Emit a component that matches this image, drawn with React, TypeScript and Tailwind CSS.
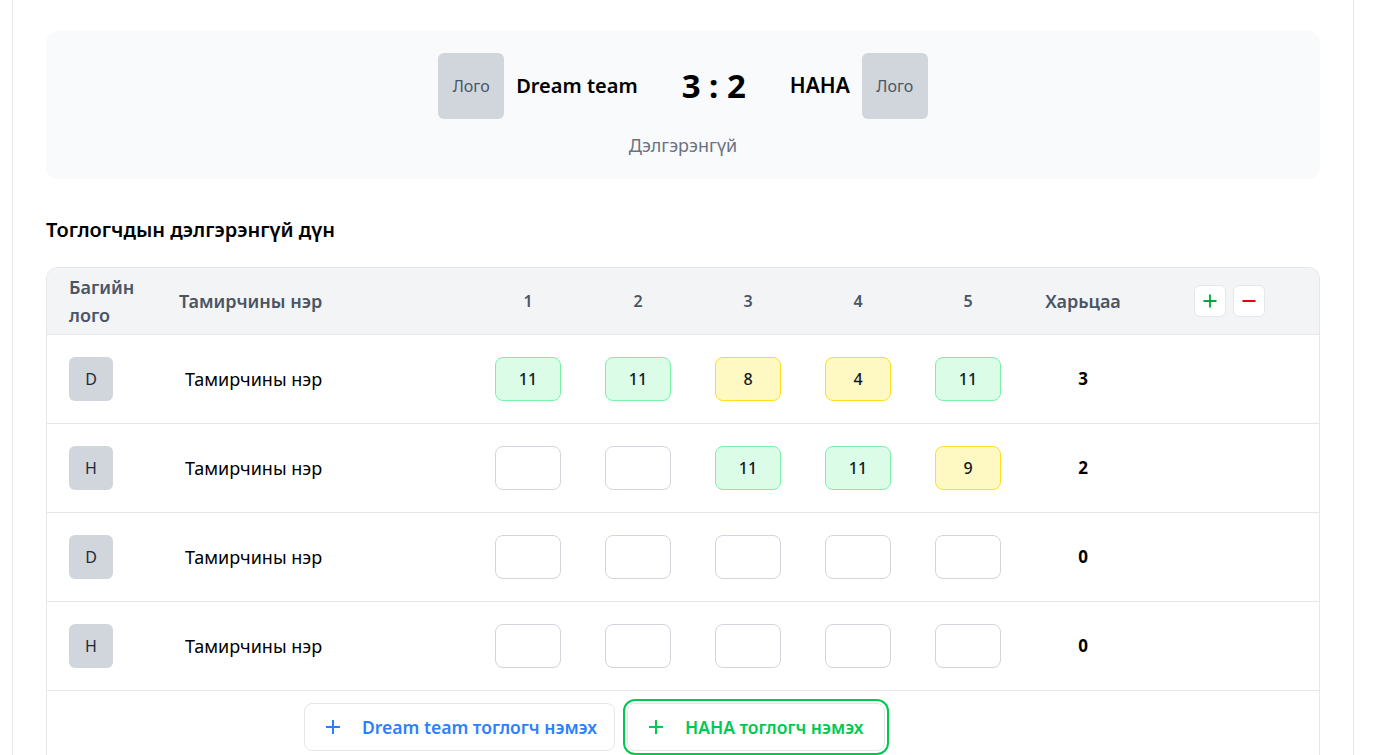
import { Plus, Minus } from 'lucide-react';

type Score = { value: number | null; win?: boolean };

interface PlayerRow {
  team: string;
  name: string;
  scores: Score[];
  total: number;
}

const rows: PlayerRow[] = [
  {
    team: 'D',
    name: 'Тамирчины нэр',
    scores: [
      { value: 11, win: true },
      { value: 11, win: true },
      { value: 8 },
      { value: 4 },
      { value: 11, win: true },
    ],
    total: 3,
  },
  {
    team: 'H',
    name: 'Тамирчины нэр',
    scores: [
      { value: null },
      { value: null },
      { value: 11, win: true },
      { value: 11, win: true },
      { value: 9 },
    ],
    total: 2,
  },
  {
    team: 'D',
    name: 'Тамирчины нэр',
    scores: [{ value: null }, { value: null }, { value: null }, { value: null }, { value: null }],
    total: 0,
  },
  {
    team: 'H',
    name: 'Тамирчины нэр',
    scores: [{ value: null }, { value: null }, { value: null }, { value: null }, { value: null }],
    total: 0,
  },
];

const gridCols = 'grid grid-cols-[113px_313px_110px_110px_110px_110px_110px_120px_1fr]';

// small plus sign used in the "add player" buttons
function PlusMark({ className }: { className: string }) {
  return (
    <svg width="16" height="16" viewBox="0 0 16 16" className={className}>
      <path d="M8 1v14M1 8h14" stroke="currentColor" strokeWidth="2" fill="none" />
    </svg>
  );
}

function ScoreBox({ score }: { score: Score }) {
  if (score.value === null) {
    return <div className="h-11 w-[66px] rounded-lg border border-gray-300 bg-white" />;
  }
  const tone = score.win ? 'bg-green-100 border-green-300' : 'bg-yellow-100 border-yellow-300';
  return (
    <div className={`flex h-11 w-[66px] items-center justify-center rounded-lg border text-base font-medium text-gray-900 ${tone}`}>
      {score.value}
    </div>
  );
}

function Logo() {
  return (
    <div className="flex h-[66px] w-[66px] items-center justify-center rounded-md bg-gray-300 text-base text-gray-600">
      Лого
    </div>
  );
}

export default function App() {
  return (
    <div className="min-h-screen bg-white font-['Noto_Sans','Open_Sans',sans-serif] text-black">
      <div className="ml-3 min-h-screen w-[1342px] border-x border-gray-200 px-[33px] pt-[31px]">
        {/* Match summary */}
        <div className="flex flex-col items-center rounded-xl bg-gray-50 pt-[22px] pb-[22px]">
          <div className="flex items-center">
            <div className="flex items-center gap-3">
              <Logo />
              <span className="text-xl font-semibold">Dream team</span>
            </div>
            <span className="mx-11 text-[33px] leading-9 font-bold">3 : 2</span>
            <div className="flex items-center gap-3">
              <span className="text-[21px] font-semibold">HAHA</span>
              <Logo />
            </div>
          </div>
          <button className="mt-[14px] text-lg leading-6 text-gray-500">Дэлгэрэнгүй</button>
        </div>

        <h2 className="mt-[37px] text-xl leading-7 font-semibold">Тоглогчдын дэлгэрэнгүй дүн</h2>

        {/* Players table */}
        <div className="mt-[23px] overflow-hidden rounded-t-xl border border-b-0 border-gray-200">
          <div className={`${gridCols} h-[66px] items-center bg-gray-100 text-lg leading-7 font-semibold text-gray-600`}>
            <div className="pr-4 pl-[22px]">Багийн лого</div>
            <div className="pl-[19px]">Тамирчины нэр</div>
            {[1, 2, 3, 4, 5].map((n) => (
              <div key={n} className="text-center text-base">
                {n}
              </div>
            ))}
            <div className="text-center">Харьцаа</div>
            <div className="flex justify-center gap-[7px] pr-1">
              <button className="flex h-8 w-8 items-center justify-center rounded-md border border-gray-200 bg-white text-green-600">
                <Plus size={20} strokeWidth={2.2} />
              </button>
              <button className="flex h-8 w-8 items-center justify-center rounded-md border border-gray-200 bg-white text-red-600">
                <Minus size={20} strokeWidth={2.2} />
              </button>
            </div>
          </div>

          {rows.map((row, i) => (
            <div key={i} className={`${gridCols} h-[89px] items-center border-t border-gray-200`}>
              <div className="pl-[22px]">
                <div className="flex h-11 w-11 items-center justify-center rounded-md bg-gray-300 text-base text-gray-800">
                  {row.team}
                </div>
              </div>
              <div className="pl-[25px] text-lg">{row.name}</div>
              {row.scores.map((s, j) => (
                <div key={j} className="flex justify-center">
                  <ScoreBox score={s} />
                </div>
              ))}
              <div className="text-center text-[17px] font-bold">{row.total}</div>
              <div />
            </div>
          ))}

          <div className="flex gap-3 border-t border-gray-200 pt-3 pb-4 pl-[257px]">
            <button className="flex h-12 items-center gap-[21px] rounded-lg border border-gray-200 bg-white pr-[17px] pl-5 text-[17.5px] font-semibold text-blue-500">
              <PlusMark className="text-blue-500" />
              Dream team тоглогч нэмэх
            </button>
            <button className="flex h-12 items-center gap-[21px] rounded-lg border border-gray-200 bg-white pr-[20px] pl-5 text-[17.5px] font-semibold text-green-500 outline-2 outline-offset-2 outline-green-500">
              <PlusMark className="text-green-500" />
              HAHA тоглогч нэмэх
            </button>
          </div>
        </div>
      </div>
    </div>
  );
}
